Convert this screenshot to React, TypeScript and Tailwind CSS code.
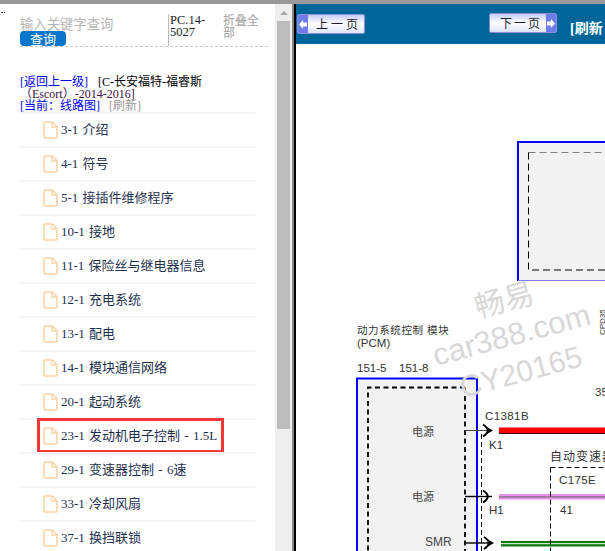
// App.tsx
const SERIF = "font-['Liberation_Serif','Noto_Sans_CJK_SC',serif]";

const CHAPTERS = [
  "3-1 介绍",
  "4-1 符号",
  "5-1 接插件维修程序",
  "10-1 接地",
  "11-1 保险丝与继电器信息",
  "12-1 充电系统",
  "13-1 配电",
  "14-1 模块通信网络",
  "20-1 起动系统",
  "23-1 发动机电子控制 - 1.5L",
  "29-1 变速器控制 - 6速",
  "33-1 冷却风扇",
  "37-1 换挡联锁",
];

function DocIcon() {
  return (
    <svg width="15" height="18" viewBox="0 0 15 18" fill="none" className="shrink-0">
      <path
        d="M2.5 1h6.7L14 5.8V15.5a1.5 1.5 0 0 1-1.5 1.5h-10A1.5 1.5 0 0 1 1 15.5v-13A1.5 1.5 0 0 1 2.5 1Z"
        stroke="#fcd3a4"
        strokeWidth="1.6"
      />
      <path d="M9 1v5h5" stroke="#fcd3a4" strokeWidth="1.4" />
    </svg>
  );
}

function PageButton({ label, dir }: { label: string; dir: "prev" | "next" }) {
  const cap = (
    <span className="flex h-full w-[10px] shrink-0 items-center justify-center bg-[#6f7ce8]">
      <svg width="8" height="9" viewBox="0 0 8 9">
        <path
          d={dir === "prev" ? "M0 4.5 4 0v2.5h4v4H4V9Z" : "M8 4.5 4 0v2.5H0v4h4V9Z"}
          fill="#fff"
        />
      </svg>
    </span>
  );
  return (
    <div className="flex h-[20px] w-[68px] items-center overflow-hidden rounded-[2px] border border-[#8a90d8] bg-gradient-to-b from-[#c8ccf8] via-white to-[#dfe1fb]">
      {dir === "prev" && cap}
      <span
        className={`flex-1 whitespace-nowrap font-['Noto_Sans_CJK_SC',sans-serif] text-[12px] leading-none text-[#1c1c2c] ${
          dir === "prev" ? "pl-[8px] tracking-[3px]" : "pl-[10px] tracking-[2px]"
        }`}
      >
        {label}
      </span>
      {dir === "next" && cap}
    </div>
  );
}

function Diagram() {
  const sans = "Liberation Sans, Noto Sans CJK SC, sans-serif";
  return (
    <svg viewBox="296 44 309 507" width="309" height="507" className="block" fontFamily={sans}>
      {/* upper module */}
      <rect x="518" y="142" width="100" height="138.5" fill="#f2f2f2" />
      <path d="M518 281V142H605" fill="none" stroke="#0000ff" strokeWidth="2" />
      <path d="M518 280.5H605" stroke="#8080ff" strokeWidth="1" />
      <path d="M528.5 152.5H605" stroke="#808080" strokeWidth="1" strokeDasharray="7 4" fill="none" />
      <path d="M528.5 152.5V270H605" stroke="#000" strokeWidth="1" strokeDasharray="7 4" fill="none" />

      {/* PCM module */}
      <text x="357" y="334" fontSize="10.5" letterSpacing="0.6" fill="#333">动力系统控制 模块</text>
      <text x="357" y="347" fontSize="11.5" fill="#333">(PCM)</text>
      <text x="357" y="372" fontSize="11.5" fill="#333">151-5</text>
      <text x="399" y="372" fontSize="11.5" fill="#333">151-8</text>
      <rect x="357" y="378.5" width="120" height="180" fill="#f2f2f2" stroke="#0000ff" strokeWidth="2" />
      <path d="M465 387.5H368V551M465 387.5V551" fill="none" stroke="#000" strokeWidth="1.8" strokeDasharray="5 3.5" />
      <text x="412" y="436" fontSize="11" fill="#444">电源</text>
      <text x="412" y="501" fontSize="11" fill="#444">电源</text>
      <text x="425" y="546" fontSize="12" fill="#444">SMR</text>

      {/* connector */}
      <text x="485" y="420" fontSize="11.5" letterSpacing="0.4" fill="#333">C1381B</text>
      <text x="489" y="449" fontSize="11.5" fill="#333">K1</text>
      <text x="489" y="514" fontSize="11.5" fill="#333">H1</text>
      <path d="M481.5 434V551" stroke="#000" strokeDasharray="5 3" />

      {/* wires */}
      <path d="M465 430.5H492" stroke="#444" strokeWidth="1" />
      <path d="M465 496.5H492" stroke="#000" strokeWidth="1.4" />
      <path d="M465 543H492" stroke="#000" strokeWidth="1.4" />
      <g fill="none" stroke="#000" strokeWidth="2">
        <path d="M483 424.5q9.5 6 0 12" />
        <path d="M483 490.5q9.5 6 0 12" />
        <path d="M484 537q9.5 6 0 12" />
      </g>
      <path d="M487 427l6 3.5-6 3.5ZM488 539.5l6 3.5-6 3.5Z" fill="#000" />
      <rect x="499" y="427.5" width="106" height="6" fill="#ff0000" />
      <path d="M499 433.5H605" stroke="#400000" strokeWidth="1" />
      <rect x="499" y="494" width="106" height="5.5" fill="#ee90ee" />
      <path d="M499 496.8H605" stroke="#777" strokeWidth="1.2" />
      <rect x="501" y="541" width="104" height="5.5" fill="#0a7a0a" />
      <path d="M501 543.7H605" stroke="#fff" strokeWidth="1" />

      {/* transmission module */}
      <text x="550" y="461" fontSize="12" letterSpacing="1" fill="#333">自动变速器</text>
      <path d="M550.5 467.5H605M550.5 467.5V551" fill="none" stroke="#000" strokeDasharray="5 3" />
      <text x="559" y="484" fontSize="11.5" letterSpacing="0.4" fill="#333">C175E</text>
      <text x="560" y="514" fontSize="11.5" fill="#333">41</text>

      <text x="595" y="396" fontSize="11.5" fill="#333">35</text>
      <text x="605" y="335" fontSize="8" fill="#333" transform="rotate(-90 605 335)">CPD35</text>

      {/* watermark lies over the drawing */}
      <g fill="#d8d8d8">
        <text x="478" y="318" fontSize="30" transform="rotate(-15 478 318)">畅易</text>
        <text x="436" y="366" fontSize="31" transform="rotate(-15 436 366)">car388.com</text>
        <text x="463" y="398" fontSize="30" transform="rotate(-15 463 398)">CY20165</text>
      </g>
    </svg>
  );
}

export default function App() {
  return (
    <div className="flex h-[551px] w-[605px] flex-col overflow-hidden bg-white">
      <div className="h-[4px] shrink-0 bg-[#999999]" />
      <div className="flex min-h-0 flex-1">
        {/* chapter tree */}
        <aside className="relative w-[275px] shrink-0 overflow-hidden pl-[20px]">
          <div className="absolute left-[1px] top-[8px] h-px w-[4px] border-t border-dotted border-[#444]" />
          <div className="flex h-[42px] items-start pt-[10px]">
            <div className="w-[148px] pt-[3px]">
              <div className="font-['Noto_Sans_CJK_SC',sans-serif] text-[13.33px] leading-[14px] text-[#b5b5b5]">
                输入关键字查询
              </div>
              <div className="flex h-[15px] w-[46px] items-center justify-center rounded-[4px] bg-[#0a76cc] font-['Noto_Sans_CJK_SC',sans-serif] text-[13px] leading-none text-white">
                查询
              </div>
            </div>
            <div className={`h-[32px] w-[55px] border-l border-[#bbbbbb] pl-px text-[12.5px] leading-[12px] text-[#222] ${SERIF}`}>
              PC.14-
              <br />
              5027
            </div>
            <div className="w-[36px] font-['Noto_Sans_CJK_SC',sans-serif] text-[12px] leading-[12px] text-[#a0a0a0]">
              折叠全部
            </div>
          </div>
          <div className="w-[248px] border-t border-dashed border-[#cccccc]" />

          <div className={`mt-[29px] h-[36px] w-[235px] text-[12px] leading-[12px] ${SERIF}`}>
            <span className="text-[#0000ee]">[返回上一级]</span>
            <span className="ml-[10px] text-black">[C-长安福特-福睿斯</span>
            <br />
            <span className="text-[#3a1040]">（Escort）-2014-2016]</span>
            <br />
            <span className="text-[#0000ee]">[当前：线路图]</span>
            <span className="ml-[9px] text-[#9a9a9a]">[刷新]</span>
          </div>

          <ul className={`w-[235px] ${SERIF}`}>
            {CHAPTERS.map((name) => (
              <li
                key={name}
                className="relative flex h-[34px] items-center gap-[3px] border-t-2 border-[#f5f5f5] pl-[23px] text-[13px] text-[#1e3050]"
              >
                <DocIcon />
                <span className="whitespace-nowrap [word-spacing:1px]">{name}</span>
                {name.startsWith("23-1") && (
                  <div className="absolute -top-[2px] left-[17px] h-[35px] w-[187px] border-[3px] border-[#f43838]" />
                )}
              </li>
            ))}
          </ul>
        </aside>

        {/* tree scrollbar */}
        <div className="flex w-[17px] shrink-0 flex-col items-center bg-[#eeeeee] pt-[7px]">
          <div className="h-0 w-0 border-x-[4px] border-b-[4px] border-x-transparent border-b-[#a8a8a8]" />
          <div className="mt-[6px] h-[408px] w-[13px] bg-[#bcbcbc]" />
        </div>

        <div className="w-[2px] shrink-0 bg-[#888888]" />
        <div className="w-[2px] shrink-0 bg-black" />

        {/* diagram view */}
        <main className="min-w-0 flex-1 overflow-hidden">
          <div className="flex h-[40px] items-start bg-[#006699] pl-[1px]">
            <div className="mt-[10px]">
              <PageButton label="上一页" dir="prev" />
            </div>
            <div className="ml-[124px] mt-[9px]">
              <PageButton label="下一页" dir="next" />
            </div>
            <span className={`ml-[13px] mt-[17px] whitespace-nowrap text-[14px] font-bold leading-[16px] text-white ${SERIF}`}>
              [刷新
            </span>
          </div>
          <Diagram />
        </main>
      </div>
    </div>
  );
}
